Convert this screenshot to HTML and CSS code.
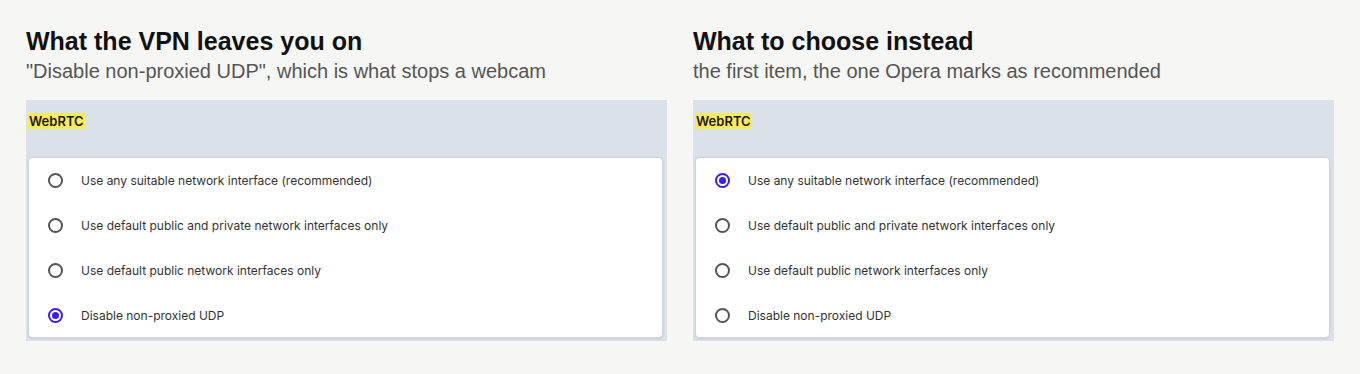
FILE: index.html
```html
<!DOCTYPE html>
<html lang="en">
<head>
    <meta charset="UTF-8">
    <title>WebRTC settings</title>
    <link rel="stylesheet" href="styles.css">
</head>
<body>
    <div class="compare">
        <section class="column">
            <h2>What the VPN leaves you on</h2>
            <p class="sub">"Disable non-proxied UDP", which is what stops a webcam</p>
            <div class="panel">
                <div class="panel-title"><mark>WebRTC</mark></div>
                <div class="card">
                    <div class="row"><span class="radio"></span>Use any suitable network interface (recommended)</div>
                    <div class="row"><span class="radio"></span>Use default public and private network interfaces only</div>
                    <div class="row"><span class="radio"></span>Use default public network interfaces only</div>
                    <div class="row"><span class="radio checked"></span>Disable non-proxied UDP</div>
                </div>
            </div>
        </section>
        <section class="column">
            <h2>What to choose instead</h2>
            <p class="sub">the first item, the one Opera marks as recommended</p>
            <div class="panel">
                <div class="panel-title"><mark>WebRTC</mark></div>
                <div class="card">
                    <div class="row"><span class="radio checked"></span>Use any suitable network interface (recommended)</div>
                    <div class="row"><span class="radio"></span>Use default public and private network interfaces only</div>
                    <div class="row"><span class="radio"></span>Use default public network interfaces only</div>
                    <div class="row"><span class="radio"></span>Disable non-proxied UDP</div>
                </div>
            </div>
        </section>
    </div>
</body>
</html>
```

FILE: styles.css
```css
body {
    margin: 0;
    background: #f6f6f4;
    font-family: 'Liberation Sans', Arial, sans-serif;
}

.compare {
    display: grid;
    grid-template-columns: 1fr 1fr;
    gap: 26px;
    padding: 26px 26px 0;
}

.column h2 {
    margin: 0;
    font-size: 25px;
    line-height: 30px;
    color: #111;
}

.sub {
    margin: 3px 0 0;
    font-size: 20px;
    line-height: 24px;
    color: #555;
}

.panel {
    margin-top: 17px;
    background: #dae1e8;
    padding: 13px 4px 3px 2px;
}

.panel-title {
    font-family: Inter, 'Noto Sans', sans-serif;
    font-size: 13px;
    font-weight: 600;
    line-height: 17px;
    height: 44px;
}

.panel-title mark {
    background: #fbeb5b;
    color: #1a1a1a;
    padding: 0 1px;
}

.card {
    background: #fff;
    border: 1px solid #cfd3d8;
    border-radius: 4px;
    box-shadow: 0 1px 2px rgba(0, 0, 0, 0.08);
}

.row {
    display: flex;
    align-items: center;
    height: 45px;
    padding-left: 19px;
    font-family: Inter, 'Noto Sans', sans-serif;
    font-size: 12px;
    color: #333;
}

.row:last-child {
    height: 43px;
    padding-top: 1px;
}

.radio {
    flex: none;
    width: 15px;
    height: 15px;
    border: 2px solid #555;
    border-radius: 50%;
    margin-right: 18px;
    box-sizing: border-box;
    position: relative;
}

.radio.checked {
    border-color: #3b1ff0;
}

.radio.checked::after {
    content: '';
    position: absolute;
    top: 2px;
    left: 2px;
    width: 7px;
    height: 7px;
    border-radius: 50%;
    background: #3b1ff0;
}
```
